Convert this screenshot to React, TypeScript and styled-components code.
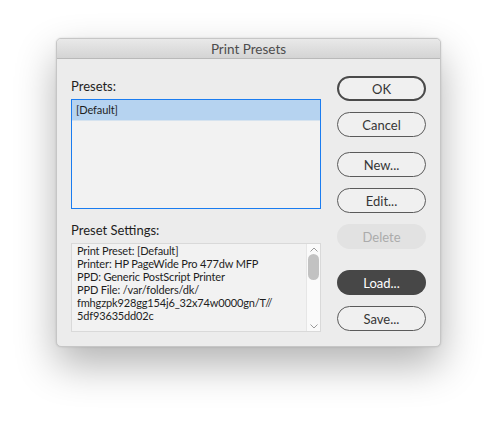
import React from 'react';
import styled, { createGlobalStyle } from 'styled-components';

const GlobalStyle = createGlobalStyle`
    html, body {
        margin: 0;
        padding: 0;
        background: #ffffff;
    }
    body {
        font-family: Lato, "Liberation Sans", sans-serif;
        -webkit-font-smoothing: antialiased;
    }
`;

const Page = styled.div`
    width: 497px;
    height: 422px;
    padding: 38px 56px 0;
    box-sizing: border-box;
`;

const Window = styled.div`
    width: 385px;
    height: 309px;
    border-radius: 5px;
    background: #ececec;
    border: 1px solid #c6c6c6;
    box-sizing: border-box;
    overflow: hidden;
    box-shadow: 0 18px 40px rgba(0, 0, 0, 0.3), 0 0 2px rgba(0, 0, 0, 0.15);
    display: flex;
    flex-direction: column;
`;

const TitleBar = styled.div`
    height: 19px;
    flex: none;
    background: linear-gradient(#e9e9e9, #d4d4d4);
    border-bottom: 1px solid #b9b9b9;
    display: flex;
    align-items: center;
    justify-content: center;
    font-size: 13.5px;
    color: #4d4d4d;
`;

const Body = styled.div`
    flex: 1;
    display: grid;
    grid-template-columns: 250px 89px;
    column-gap: 16px;
    padding: 17px 14px 0 14px;
`;

const LeftColumn = styled.div`
    display: flex;
    flex-direction: column;
`;

const Label = styled.div<{ $top: number }>`
    font-size: 13px;
    line-height: 16px;
    color: #1e1e1e;
    margin-top: ${p => p.$top}px;
    margin-bottom: 5px;
`;

const ListBox = styled.div`
    height: 110px;
    box-sizing: border-box;
    border: 1px solid #1a7cf0;
    background: #f2f2f2;
`;

const ListRow = styled.div<{ $selected?: boolean }>`
    height: 20px;
    line-height: 20px;
    padding-left: 4px;
    font-size: 11px;
    letter-spacing: -0.1px;
    color: #1e1e1e;
    background: ${p => (p.$selected ? '#b6d3f0' : 'transparent')};
    border-bottom: 1px solid ${p => (p.$selected ? '#d6e3ef' : 'transparent')};
`;

const SettingsBox = styled.div`
    height: 89px;
    box-sizing: border-box;
    border: 1px solid #d9d9d9;
    background: #f2f2f2;
    display: flex;
`;

const SettingsText = styled.div`
    flex: 1;
    padding: 0 0 0 5px;
    font-size: 11px;
    letter-spacing: -0.15px;
    line-height: 13px;
    color: #1e1e1e;
    white-space: pre;
    overflow: hidden;
`;

const ScrollTrack = styled.div`
    width: 14px;
    flex: none;
    background: #fafafa;
    border-left: 1px solid #e6e6e6;
    display: flex;
    flex-direction: column;
    align-items: center;
    padding: 3px 0 2px;
    box-sizing: border-box;
`;

const ScrollThumb = styled.div`
    width: 11px;
    height: 26px;
    border-radius: 6px;
    background: #c2c2c2;
    margin-top: 2px;
`;

const Spacer = styled.div`
    flex: 1;
`;

const ButtonColumn = styled.div`
    display: flex;
    flex-direction: column;
`;

type Variant = 'default' | 'normal' | 'disabled' | 'dark';

const Button = styled.button<{ $variant: Variant; $gap: number }>`
    height: 25px;
    width: 89px;
    margin-top: ${p => p.$gap}px;
    box-sizing: border-box;
    border-radius: 13px;
    font-family: Lato, "Liberation Sans", sans-serif;
    font-size: 13px;
    padding: 0;
    cursor: default;
    border: ${p =>
        p.$variant === 'default'
            ? '2px solid #4a4a4a'
            : p.$variant === 'normal'
            ? '1px solid #5a5a5a'
            : '1px solid transparent'};
    background: ${p =>
        p.$variant === 'dark' ? '#474747' : p.$variant === 'disabled' ? '#e2e2e2' : '#f0f0f0'};
    color: ${p =>
        p.$variant === 'dark' ? '#ffffff' : p.$variant === 'disabled' ? '#ababab' : '#363636'};
`;

const Chevron = ({ up }: { up?: boolean }) => (
    <svg width="8" height="5" viewBox="0 0 8 5">
        <path
            d={up ? 'M0.5 4.5 L4 1 L7.5 4.5' : 'M0.5 0.5 L4 4 L7.5 0.5'}
            fill="none"
            stroke="#9a9a9a"
            strokeWidth="1"
        />
    </svg>
);

const settings = [
    'Print Preset: [Default]',
    'Printer: HP PageWide Pro 477dw MFP',
    'PPD: Generic PostScript Printer',
    'PPD File: /var/folders/dk/',
    'fmhgzpk928gg154j6_32x74w0000gn/T//',
    '5df93635dd02c',
].join('\n');

const buttons: { label: string; variant: Variant; gap: number }[] = [
    { label: 'OK', variant: 'default', gap: 0 },
    { label: 'Cancel', variant: 'normal', gap: 11 },
    { label: 'New...', variant: 'normal', gap: 15 },
    { label: 'Edit...', variant: 'normal', gap: 11 },
    { label: 'Delete', variant: 'disabled', gap: 11 },
    { label: 'Load...', variant: 'dark', gap: 21 },
    { label: 'Save...', variant: 'normal', gap: 11 },
];

const App = () => {
    return (
        <Page>
            <GlobalStyle />
            <Window>
                <TitleBar>Print Presets</TitleBar>
                <Body>
                    <LeftColumn>
                        <Label $top={2}>Presets:</Label>
                        <ListBox>
                            <ListRow $selected>[Default]</ListRow>
                        </ListBox>
                        <Label $top={13}>Preset Settings:</Label>
                        <SettingsBox>
                            <SettingsText>{settings}</SettingsText>
                            <ScrollTrack>
                                <Chevron up />
                                <ScrollThumb />
                                <Spacer />
                                <Chevron />
                            </ScrollTrack>
                        </SettingsBox>
                    </LeftColumn>
                    <ButtonColumn>
                        {buttons.map(b => (
                            <Button key={b.label} $variant={b.variant} $gap={b.gap} disabled={b.variant === 'disabled'}>
                                {b.label}
                            </Button>
                        ))}
                    </ButtonColumn>
                </Body>
            </Window>
        </Page>
    );
};

export default App;
